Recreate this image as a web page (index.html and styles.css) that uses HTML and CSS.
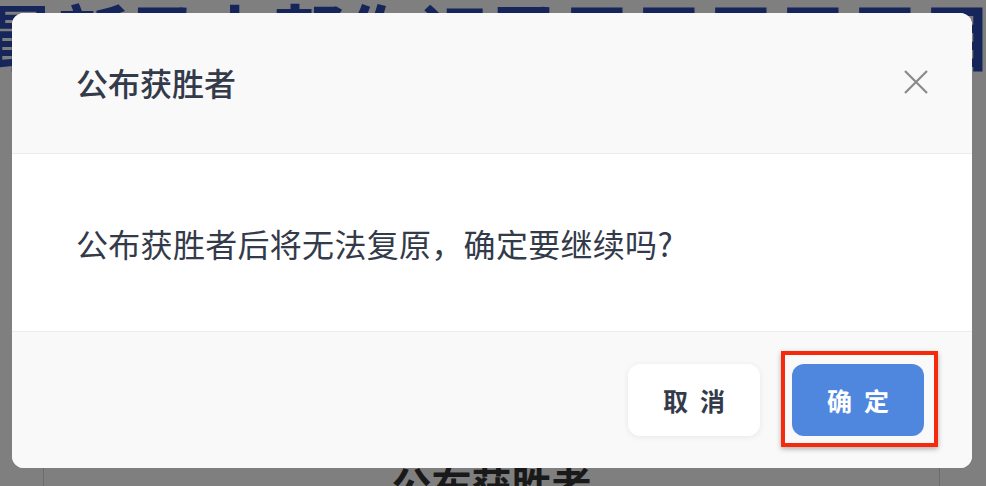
FILE: index.html
```html
<!DOCTYPE html>
<html lang="zh-CN">
	<head>
		<meta charset="utf-8">
		<title>公布获胜者</title>
		<link rel="stylesheet" href="styles.css">
	</head>
	<body>
		<div class="page">
			<h1 class="page-title">最新马上帮你记录目目目目目目目</h1>
			<div class="panel">
				<p class="panel-desc">本轮评选已结束，请确认最终结果。</p>
				<h2 class="panel-title">公布获胜者</h2>
			</div>
		</div>

		<!-- 确认弹窗 -->
		<div class="mask">
			<div class="modal">
				<div class="modal-header">
					<h3 class="modal-title">公布获胜者</h3>
					<button class="modal-close" type="button">
						<svg width="24" height="24" viewBox="0 0 24 24">
							<path d="M1 1 L23 23 M23 1 L1 23" stroke="#8a8a8a" stroke-width="2.2" fill="none"/>
						</svg>
					</button>
				</div>
				<div class="modal-body">
					<p>公布获胜者后将无法复原，确定要继续吗?</p>
				</div>
				<div class="modal-footer">
					<button class="btn btn-cancel" type="button">取消</button>
					<div class="btn-wrap">
						<button class="btn btn-ok" type="button">确定</button>
						<span class="mark"></span>
					</div>
				</div>
			</div>
		</div>
	</body>
</html>
```

FILE: styles.css
```css
* {
	margin: 0;
	padding: 0;
	box-sizing: border-box;
}

body {
	background: #fff;
	font-family: "Noto Sans CJK SC", "Noto Sans", sans-serif;
	overflow: hidden;
	height: 486px;
}

.page {
	padding: 0 46px 0 43px;
}

	.page-title {
		margin: -6px -60px 0 -58px;
		font-size: 72px;
		line-height: 80px;
		color: #2e4cb4;
		white-space: nowrap;
		font-weight: 700;
	}

	.panel {
		margin-top: 250px;
		border: 1px solid #d8d8d8;
		height: 260px;
		text-align: center;
	}

		.panel-desc {
			font-size: 20px;
			color: #666;
			padding-top: 40px;
			height: 134px;
		}

		.panel-title {
			font-size: 40px;
			line-height: 50px;
			color: #333;
		}

.mask {
	position: fixed;
	top: 0;
	left: 0;
	right: 0;
	bottom: 0;
	background: rgba(0, 0, 0, 0.5);
	display: flex;
	align-items: flex-start;
	padding: 13px 0 0 12px;
}

.modal {
	width: 960px;
	border-radius: 12px;
	overflow: hidden;
	background: #fff;
	color: #333a4a;
}

	.modal-header {
		height: 141px;
		background: #f9f9f9;
		border-bottom: 1px solid #ececec;
		display: flex;
		align-items: center;
		justify-content: space-between;
		padding: 0 44px 0 64px;
	}

		.modal-title {
			font-size: 32px;
			font-weight: 500;
			margin-top: -2px;
		}

		.modal-close {
			border: none;
			background: none;
			width: 24px;
			height: 24px;
			margin-top: -2px;
		}

	.modal-body {
		height: 178px;
		border-bottom: 1px solid #ececec;
		display: flex;
		align-items: center;
		padding-left: 64px;
		font-size: 32px;
		letter-spacing: 0.3px;
	}

	.modal-footer {
		height: 136px;
		background: #f9f9f9;
		display: flex;
		justify-content: flex-end;
		align-items: center;
		gap: 32px;
		padding-right: 48px;
	}

.btn {
	width: 132px;
	height: 72px;
	border: none;
	border-radius: 12px;
	font-family: "Noto Sans CJK SC", sans-serif;
	font-size: 25px;
	font-weight: 700;
	letter-spacing: 12px;
	padding-left: 12px;
}

	.btn-cancel {
		background: #fff;
		color: #333a4a;
		box-shadow: 0 1px 6px rgba(0, 0, 0, 0.08);
	}

	.btn-wrap {
		position: relative;
		display: flex;
	}

	.btn-ok {
		background: #4f87df;
		color: #fff;
	}

	.mark {
		position: absolute;
		left: -11px;
		top: -13px;
		right: -14px;
		bottom: -11px;
		border: 4px solid #f52a0c;
		box-shadow: 0 2px 5px rgba(0, 0, 0, 0.3);
	}
```
